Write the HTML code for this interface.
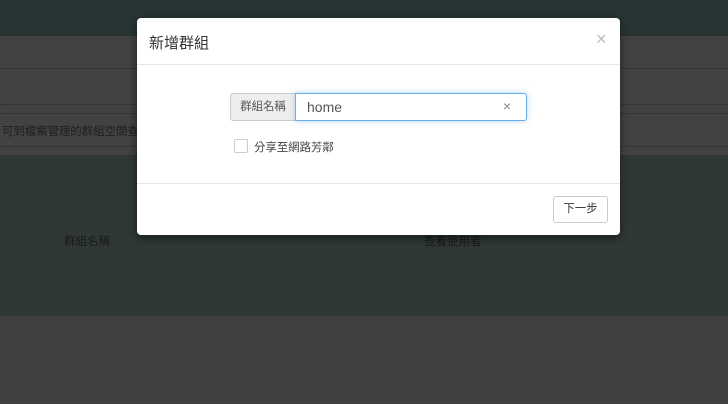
<!DOCTYPE html>
<html><head><meta charset="utf-8"><style>
body{margin:0;width:728px;height:404px;overflow:hidden;background:#404040;font-family:"Liberation Sans","Noto Sans CJK TC",sans-serif;position:relative}
.a{position:absolute}
</style></head><body>
<div class="a" style="left:0;top:0;width:728px;height:36px;background:#283333"></div>
<div class="a" style="left:0;top:36px;width:728px;height:119px;background:#424242"></div>
<div class="a" style="left:0;top:68px;width:728px;height:1px;background:#353535"></div>
<div class="a" style="left:0;top:104px;width:728px;height:0;border-top:1px dotted #2a2a2a"></div>
<div class="a" style="left:0;top:113px;width:728px;height:1px;background:#353535"></div>
<div class="a" style="left:0;top:146px;width:728px;height:1px;background:#353535"></div>
<div class="a" style="left:2px;top:123px;font-size:11.4px;color:#1e1e1e">可到檔案管理的群組空間查</div>
<div class="a" style="left:0;top:155px;width:728px;height:161px;background:#2f3737"></div>
<div class="a" style="left:64px;top:233px;font-size:11.5px;color:#1a1a1a">群組名稱</div>
<div class="a" style="left:424px;top:233px;font-size:11.5px;color:#1a1a1a">查看使用者</div>
<div class="a" style="left:137px;top:18px;width:483px;height:217px;background:#fff;border-radius:4px;box-shadow:0 3px 9px rgba(0,0,0,.5)">
 <div class="a" style="left:12px;top:14px;font-size:15px;color:#333">新增群組</div>
 <div class="a" style="left:459px;top:11px;font-size:18px;color:#bbb">×</div>
 <div class="a" style="left:0;top:46px;width:483px;height:1px;background:#e5e5e5"></div>
 <div class="a" style="left:93px;top:75px;width:64px;height:26px;background:#eee;border:1px solid #ccc;border-radius:3px 0 0 3px;font-size:11.4px;color:#555;text-align:center;line-height:26px">群組名稱</div>
 <div class="a" style="left:158px;top:75px;width:230px;height:26px;border:1px solid #66afe9;border-radius:0 3px 3px 0;box-shadow:0 0 6px rgba(102,175,233,.5)">
  <span class="a" style="left:11px;top:5px;font-size:14px;color:#555">home</span>
  <span class="a" style="left:207px;top:4px;font-size:14px;color:#888">×</span>
 </div>
 <div class="a" style="left:97px;top:121px;width:12px;height:12px;border:1px solid #ccc;border-radius:2px"></div>
 <div class="a" style="left:117px;top:121px;font-size:11.4px;color:#444">分享至網路芳鄰</div>
 <div class="a" style="left:0;top:165px;width:483px;height:1px;background:#e5e5e5"></div>
 <div class="a" style="left:416px;top:178px;width:53px;height:25px;border:1px solid #ccc;border-radius:3px;font-size:11.4px;color:#333;text-align:center;line-height:25px">下一步</div>
</div>
</body></html>
